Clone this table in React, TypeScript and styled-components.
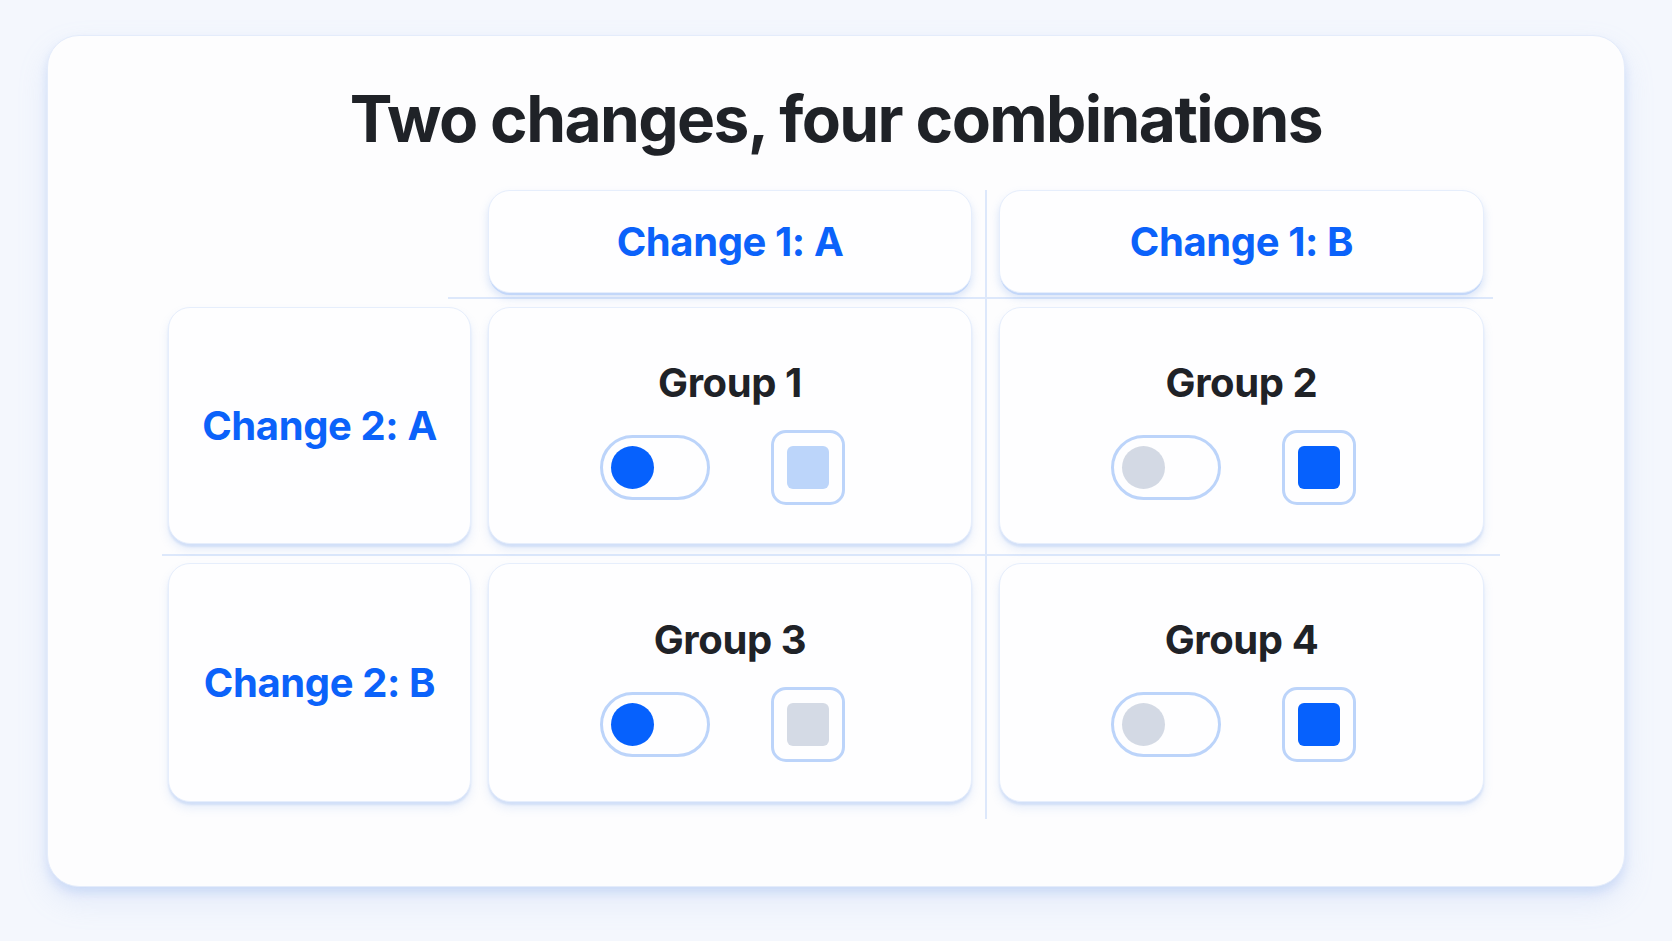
import React from "react";
import styled, { createGlobalStyle } from "styled-components";

const Global = createGlobalStyle`
  html, body { margin: 0; padding: 0; background: #f4f7fd; }
  body { font-family: Inter, "Noto Sans", "Liberation Sans", sans-serif; }
  * { box-sizing: border-box; }
`;

const Page = styled.div`
  width: 1672px;
  height: 941px;
  padding: 35px 47px 0;
  background: #f4f7fd;
`;

const Card = styled.div`
  width: 1578px;
  height: 852px;
  background: #fdfdfe;
  border-radius: 32px;
  border: 1px solid #e4ecfb;
  box-shadow: 0 6px 10px rgba(120, 160, 235, 0.22), 0 14px 30px rgba(150, 180, 240, 0.18);
  padding-top: 44px;
  display: flex;
  flex-direction: column;
`;

const Title = styled.h1`
  margin: 0;
  text-align: center;
  font-size: 64px;
  line-height: 78px;
  font-weight: 700;
  letter-spacing: -0.025em;
  color: #1f2227;
`;

const Matrix = styled.div`
  margin: 32px 0 0 120px;
  display: grid;
  grid-template-columns: 303px 17px 484px 27px 485px;
  grid-template-rows: 103px 14px 237px 19px 239px;
`;

const Cell = styled.div<{ $col: number; $row: number; $header?: boolean }>`
  grid-column: ${(p) => p.$col};
  grid-row: ${(p) => p.$row};
  position: relative;
  z-index: 1;
  background: #fefeff;
  border-radius: 22px;
  border: 1px solid #e6eefc;
  box-shadow: ${(p) =>
    p.$header
      ? "0 3px 0 -1px #c3d7f9, 0 5px 8px rgba(120,160,235,0.28)"
      : "0 3px 2px rgba(140,175,240,0.24), 0 6px 10px rgba(130,165,235,0.18)"};
  display: flex;
  flex-direction: column;
  align-items: center;
  justify-content: center;
`;

const AxisLabel = styled.div`
  font-size: 40px;
  line-height: 46px;
  font-weight: 700;
  letter-spacing: -0.01em;
  color: #0b62fa;
`;

const GroupLabel = styled.div`
  font-size: 40px;
  line-height: 46px;
  font-weight: 700;
  letter-spacing: -0.01em;
  color: #1f2227;
  margin-top: 14px;
`;

const Controls = styled.div`
  display: flex;
  align-items: center;
  gap: 61px;
  margin-top: 24px;
  margin-right: 16px;
`;

const Toggle = styled.div<{ $on: boolean }>`
  width: 110px;
  height: 65px;
  border-radius: 33px;
  border: 3px solid #bcd4fa;
  background: #fefeff;
  display: flex;
  align-items: center;
  padding-left: 8px;
  &::after {
    content: "";
    width: 43px;
    height: 43px;
    border-radius: 50%;
    background: ${(p) => (p.$on ? "#0661fd" : "#d3d9e4")};
  }
`;

const Check = styled.div<{ $fill: string }>`
  width: 74px;
  height: 75px;
  border-radius: 15px;
  border: 3px solid #bcd4fa;
  background: #fefeff;
  display: flex;
  align-items: center;
  justify-content: center;
  &::after {
    content: "";
    width: 42px;
    height: 43px;
    border-radius: 6px;
    background: ${(p) => p.$fill};
  }
`;

const HLine = styled.div<{ $row: number; $top: number; $left: number; $right: number }>`
  grid-column: 1 / -1;
  grid-row: ${(p) => p.$row};
  align-self: start;
  height: 2px;
  margin: ${(p) => `${p.$top}px ${p.$right}px 0 ${p.$left}px`};
  background: #dde8fb;
`;

const VLine = styled.div`
  grid-column: 4;
  grid-row: 1 / -1;
  justify-self: center;
  width: 2px;
  margin-bottom: -17px;
  background: #dde8fb;
`;

const BLUE = "#0661fd";
const LIGHT = "#bcd5fa";
const GRAY = "#d4dae5";

const groups = [
  { name: "Group 1", col: 3, row: 3, on: true, fill: LIGHT },
  { name: "Group 2", col: 5, row: 3, on: false, fill: BLUE },
  { name: "Group 3", col: 3, row: 5, on: true, fill: GRAY },
  { name: "Group 4", col: 5, row: 5, on: false, fill: BLUE },
];

export default function App() {
  return (
    <Page>
      <Global />
      <Card>
        <Title>Two changes, four combinations</Title>
        <Matrix>
          <VLine />
          <HLine $row={2} $top={4} $left={280} $right={-9} />
          <HLine $row={4} $top={10} $left={-6} $right={-16} />
          <Cell $col={3} $row={1} $header>
            <AxisLabel>Change 1: A</AxisLabel>
          </Cell>
          <Cell $col={5} $row={1} $header>
            <AxisLabel>Change 1: B</AxisLabel>
          </Cell>
          <Cell $col={1} $row={3}>
            <AxisLabel>Change 2: A</AxisLabel>
          </Cell>
          <Cell $col={1} $row={5}>
            <AxisLabel>Change 2: B</AxisLabel>
          </Cell>
          {groups.map((g) => (
            <Cell key={g.name} $col={g.col} $row={g.row}>
              <GroupLabel>{g.name}</GroupLabel>
              <Controls>
                <Toggle $on={g.on} />
                <Check $fill={g.fill} />
              </Controls>
            </Cell>
          ))}
        </Matrix>
      </Card>
    </Page>
  );
}
